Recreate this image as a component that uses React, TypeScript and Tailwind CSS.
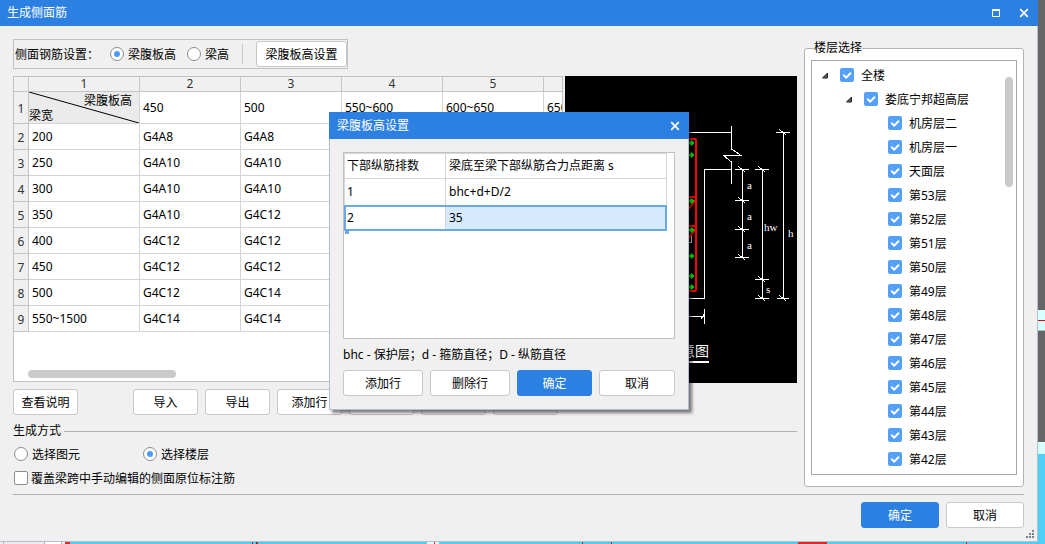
import React, { useState } from 'react';

const COLUMNS = ['450', '500', '550~600', '600~650', '650~700'];

const ROWS: string[][] = [
  ['200', 'G4A8', 'G4A8', 'G4A8', 'G4A10', 'G4A10'],
  ['250', 'G4A10', 'G4A10', 'G4A10', 'G4C12', 'G4C12'],
  ['300', 'G4A10', 'G4A10', 'G4C12', 'G4C12', 'G4C12'],
  ['350', 'G4A10', 'G4C12', 'G4C12', 'G4C12', 'G4C14'],
  ['400', 'G4C12', 'G4C12', 'G4C12', 'G4C14', 'G4C14'],
  ['450', 'G4C12', 'G4C12', 'G4C14', 'G4C14', 'G4C14'],
  ['500', 'G4C12', 'G4C14', 'G4C14', 'G4C14', 'G4C16'],
  ['550~1500', 'G4C14', 'G4C14', 'G4C14', 'G4C16', 'G4C16'],
];

const FLOORS: { label: string; level: number }[] = [
  { label: '全楼', level: 0 },
  { label: '娄底宁邦超高层', level: 1 },
  { label: '机房层二', level: 2 },
  { label: '机房层一', level: 2 },
  { label: '天面层', level: 2 },
  ...Array.from({ length: 12 }, (_, i) => ({ label: `第${53 - i}层`, level: 2 })),
];

const INDENT = ['pl-[10px]', 'pl-[34px]', 'pl-[58px]'];

const CloseIcon = () => (
  <svg width="10" height="10" viewBox="0 0 10 10" fill="none" stroke="white" strokeWidth="1.7">
    <path d="M1.2 1.2 8.8 8.8M8.8 1.2 1.2 8.8" />
  </svg>
);

type ButtonProps = { children: React.ReactNode; className?: string; primary?: boolean; disabled?: boolean };

const Button: React.FC<ButtonProps> = ({ children, className = '', primary, disabled }) => (
  <button
    type="button"
    disabled={disabled}
    className={`h-[26px] shrink-0 rounded-[3px] border pt-[2px] text-center whitespace-nowrap ${
      primary ? 'bg-[#2c80e2] border-[#2c80e2] text-white' : 'border-[#c8c8c8] text-black'
    } ${primary ? '' : disabled ? 'bg-[#e9e9e9]' : 'bg-white'} ${className}`}
  >
    {children}
  </button>
);

type RadioProps = { name: string; label: string; checked: boolean; onChange: () => void; className?: string };

const Radio: React.FC<RadioProps> = ({ name, label, checked, onChange, className = '' }) => (
  <label className={`flex h-4 items-center gap-1 whitespace-nowrap ${className}`}>
    <input
      type="radio"
      name={name}
      checked={checked}
      onChange={onChange}
      className="grid size-[14px] shrink-0 appearance-none place-content-center rounded-full border border-[#8c8c8c] bg-white before:size-[6px] before:rounded-full checked:before:bg-[#4c9dfb]"
    />
    <span className="pt-[2px]">{label}</span>
  </label>
);

const Checkbox: React.FC<{ label: string; initial?: boolean; className?: string }> = ({ label, initial = false, className = '' }) => {
  const [on, setOn] = useState(initial);
  return (
    <label className={`flex h-4 items-center whitespace-nowrap ${className}`}>
      <span className="relative flex size-[14px] shrink-0">
        <input
          type="checkbox"
          checked={on}
          onChange={() => setOn(!on)}
          className="size-[14px] appearance-none rounded-[2px] border border-[#8c8c8c] bg-white checked:border-[#54a0fa] checked:bg-[#54a0fa]"
        />
        {on && (
          <svg className="pointer-events-none absolute inset-0" width="14" height="14" viewBox="0 0 14 14" fill="none" stroke="white" strokeWidth="2">
            <path d="M3.3 6.7 6.2 9.6 11 4.6" />
          </svg>
        )}
      </span>
      <span className="pt-[2px]">{label}</span>
    </label>
  );
};

const RebarTable = () => (
  <div className="relative mb-px min-w-0 flex-1 overflow-hidden border border-[#bfc1c3] bg-white">
    <table className="w-[631px] table-fixed border-separate border-spacing-0">
      <colgroup>
        <col className="w-[15px]" />
        <col className="w-[111px]" />
        {COLUMNS.map((c) => <col key={c} className="w-[101px]" />)}
      </colgroup>
      <thead>
        <tr className="h-[15px] bg-[#f0f0f0] text-[#333]">
          <td className="border-r border-b border-[#c4c4c4] p-0" />
          {[1, 2, 3, 4, 5, 6].map((n) => (
            <th key={n} scope="col" className="border-r border-b border-[#c4c4c4] p-0 leading-[14px] font-normal">{n}</th>
          ))}
        </tr>
      </thead>
      <tbody>
        <tr className="h-8">
          <th scope="row" className="border-r border-b border-[#c4c4c4] bg-[#f0f0f0] px-0 pt-[2px] pb-0 font-normal text-[#333]">1</th>
          <td className="relative border-r border-b border-[#d4d4d4] bg-[#ebebeb] p-0">
            <svg className="absolute inset-0 h-full w-full" viewBox="0 0 110 31" preserveAspectRatio="none" stroke="black" strokeWidth="1">
              <path d="M0 0 110 31" />
            </svg>
            <div className="relative pr-[7px] text-right leading-[17px]">梁腹板高</div>
            <div className="relative leading-[14px]">梁宽</div>
          </td>
          {COLUMNS.map((c) => (
            <td key={c} className="border-r border-b border-[#d4d4d4] py-0 pr-0 pl-[3px]">{c}</td>
          ))}
        </tr>
        {ROWS.map((row, r) => (
          <tr key={row[0]} className="h-[26px]">
            <th scope="row" className="border-r border-b border-[#c4c4c4] bg-[#f0f0f0] px-0 pt-[2px] pb-0 font-normal text-[#333]">{r + 2}</th>
            {row.map((v, i) => (
              <td key={i} className="border-r border-b border-[#d4d4d4] py-0 pr-0 pl-[3px]">{v}</td>
            ))}
          </tr>
        ))}
      </tbody>
    </table>
    <div className="absolute bottom-[3px] left-[14px] h-2 w-[148px] rounded-full bg-[#cacaca]" />
  </div>
);

// dimension tick: short bar with a slash across the line end
const Tick: React.FC<{ x: number; y: number; w?: number }> = ({ x, y, w = 7 }) => (
  <path d={`M${x - w} ${y}H${x + w}M${x - 4} ${y - 3}L${x + 3} ${y + 2}`} />
);

const SectionDrawing = () => (
  <svg className="h-[307px] w-[232px] shrink-0 bg-black" viewBox="0 0 232 307" fill="none">
    <g stroke="white" strokeWidth="1" shapeRendering="crispEdges">
      <path d="M20 56.5H166.5M166.5 50V73L176 79.5H158.5L166.5 86V108" />
      <path d="M166 93.5H139.5V222.5H40" />
      <path d="M40 240.5H139.5M139.5 233V248M136 243 140 237" />
      <path d="M177.5 93V181M197.5 93V222M218.5 56V222" />
      <path d="M126.5 157V166H120" stroke="#c8c8c8" />
      <Tick x={177} y={93.5} />
      <Tick x={177} y={124.5} />
      <Tick x={177} y={153.5} />
      <Tick x={177} y={181.5} />
      <Tick x={197} y={93.5} />
      <Tick x={197} y={203.5} />
      <Tick x={197} y={222.5} />
      <Tick x={218} y={56.5} />
      <Tick x={218} y={222.5} w={6} />
    </g>
    <g stroke="red" strokeWidth="2">
      <rect x="50" y="63" width="81" height="152" rx="1" />
      <path d="M50 121H131M131 123 123 134M50 150H131M131 152 123 163" />
    </g>
    <g fill="#00f000">
      {[66, 78, 124, 153, 179, 199, 210].map((y) => (
        <path key={y} d={`M126.500 ${y - 2}l3 3-3 3-3-3z`} />
      ))}
    </g>
    <g fill="white" className="font-['Liberation_Serif','Noto_Sans_CJK_SC',serif] text-[11px]">
      <text x="182" y="113">a</text>
      <text x="182" y="144">a</text>
      <text x="182" y="173">a</text>
      <text x="199" y="155">hw</text>
      <text x="201" y="217">s</text>
      <text x="223" y="161">h</text>
      <text x="144" y="280" textAnchor="end" className="text-[14px]">示意图</text>
    </g>
    <path d="M60 286H144" stroke="white" strokeWidth="2" />
  </svg>
);

const FloorTree = () => (
  <fieldset className="mt-px w-[220px] shrink-0 self-start rounded-[3px] border border-[#b4b4b4] bg-white px-[6px] pb-[11px]">
    <legend className="ml-[3px] h-4 leading-4">楼层选择</legend>
    <div className="relative mt-1 border border-[#a8a8a8] bg-white pt-[2px] pb-[3px]">
      <ul>
        {FLOORS.map((f) => (
          <li key={f.label} className={`flex h-6 items-center ${INDENT[f.level]}`}>
            <span className="flex w-[18px] shrink-0">
              {f.level < 2 && (
                <svg width="6" height="7" viewBox="0 0 6 7" fill="#555" stroke="#262626" strokeWidth="1">
                  <path d="M5.500 1V6H.5z" />
                </svg>
              )}
            </span>
            <Checkbox label={f.label} initial className="gap-[7px]" />
          </li>
        ))}
      </ul>
      <div className="absolute top-4 right-[3px] h-[110px] w-2 rounded-full bg-[#cacaca]" />
    </div>
  </fieldset>
);

const SettingsDialog: React.FC<{ onClose: () => void }> = ({ onClose }) => (
  <div
    role="dialog"
    aria-label="梁腹板高设置"
    className="absolute top-[112px] left-[329px] w-[360px] bg-[#f0f0f0] shadow-[3px_3px_3px_rgba(0,0,0,0.5)]"
  >
    <header className="flex h-[27px] items-center justify-between bg-[#2c80e2] pr-[9px] pl-2 text-white">
      <h2>梁腹板高设置</h2>
      <button type="button" aria-label="关闭" onClick={onClose}><CloseIcon /></button>
    </header>
    <div className="border-x border-b border-[#b4bfcc] px-[13px] pt-[13px] pb-[13px]">
      <div className="h-[187px] border border-[#bfc1c3] bg-white">
        <table className="w-[323px] table-fixed border-separate border-spacing-0 border-t border-l border-[#d8d8d8]">
          <colgroup>
            <col className="w-[101px]" />
            <col />
          </colgroup>
          <tbody>
            <tr className="h-[25px]">
              <th scope="col" className="border-r border-b border-[#d4d4d4] py-0 pr-0 pl-[2px] text-left font-normal">下部纵筋排数</th>
              <th scope="col" className="border-r border-b border-[#d4d4d4] py-0 pr-0 pl-[3px] text-left font-normal">梁底至梁下部纵筋合力点距离 s</th>
            </tr>
            <tr className="h-[26px]">
              <td className="border-r border-[#d4d4d4] py-0 pr-0 pl-[2px]">1</td>
              <td className="border-r border-[#d4d4d4] py-0 pr-0 pl-[3px]">bhc+d+D/2</td>
            </tr>
            <tr className="relative h-[26px]">
              <td className="border-r border-[#d4d4d4] py-0 pr-0 pl-[2px]">
                2
                <span className="pointer-events-none absolute inset-y-0 -left-px right-0 border-2 border-[#6aa9e8]" />
                <span className="absolute -bottom-[3px] left-0 h-1 w-1 bg-[#6aa9e8]" />
              </td>
              <td className="bg-[#d6e9ff] py-0 pr-0 pl-[3px]">35</td>
            </tr>
          </tbody>
        </table>
      </div>
      <p className="mt-2 leading-4">bhc - 保护层；d - 箍筋直径；D - 纵筋直径</p>
      <div className="mt-[7px] flex gap-[7px]">
        <Button className="w-20">添加行</Button>
        <Button className="w-20">删除行</Button>
        <Button className="w-[75px]" primary>确定</Button>
        <Button className="flex-1">取消</Button>
      </div>
    </div>
  </div>
);

export default function App() {
  const [basis, setBasis] = useState('web');
  const [mode, setMode] = useState('floor');
  const [dialogOpen, setDialogOpen] = useState(true);

  return (
    <div className="relative bg-[#4dcff8] font-['Noto_Sans','Noto_Sans_CJK_SC',sans-serif] text-[12px] leading-4 text-black">
      <div className="flex">
        <div className="min-w-0 flex-1">
          <header className="flex h-[26px] items-center justify-between bg-[#2c80e2] pr-[9px] pl-[7px] text-white">
            <h1>生成侧面筋</h1>
            <div className="flex items-center gap-[18px]">
              <button type="button" aria-label="最大化">
                <svg width="10" height="10" viewBox="0 0 10 10" fill="none" stroke="white">
                  <path d="M1.500 2V8.500H8.500V2M1 2.500H9" />
                  <path d="M1 2H9" strokeWidth="2" />
                </svg>
              </button>
              <button type="button" aria-label="关闭"><CloseIcon /></button>
            </div>
          </header>

          <main className="relative border-r border-b border-[#b4bfcc] bg-[#f0f0f0] px-[13px] py-[13px]">
            <div className="flex gap-[7px]">
              <div className="min-w-0 flex-1">
                <div className="flex h-[30px] w-max items-center border border-[#bfc3c8] pl-px">
                  <span className="pt-[2px]">侧面钢筋设置：</span>
                  <Radio className="ml-[11px]" name="basis" label="梁腹板高" checked={basis === 'web'} onChange={() => setBasis('web')} />
                  <Radio className="ml-[11px]" name="basis" label="梁高" checked={basis === 'beam'} onChange={() => setBasis('beam')} />
                  <span className="mx-[13px] h-5 w-px bg-[#c8c8c8]" />
                  <button
                    type="button"
                    onClick={() => setDialogOpen(true)}
                    className="h-[26px] w-[91px] rounded-[3px] border border-[#c8c8c8] bg-white pt-[2px]"
                  >
                    梁腹板高设置
                  </button>
                </div>

                <div className="mt-[7px] flex gap-[2px]">
                  <RebarTable />
                  <SectionDrawing />
                </div>

                <div className="mt-[6px] flex gap-[7px]">
                  <Button className="mr-12 w-[65px]">查看说明</Button>
                  <Button className="w-[65px]">导入</Button>
                  <Button className="w-[65px]">导出</Button>
                  <Button className="w-[65px]">添加行</Button>
                  <Button className="w-[65px]">删除行</Button>
                  <Button className="w-[65px]" disabled>添加列</Button>
                  <Button className="w-[65px]" disabled>删除列</Button>
                </div>

                <fieldset className="mt-2 border-t border-[#b0b0b0]">
                  <legend className="pr-[3px]">生成方式</legend>
                  <div className="mt-[7px] flex items-center">
                    <Radio className="w-[129px] pl-px" name="mode" label="选择图元" checked={mode === 'element'} onChange={() => setMode('element')} />
                    <Radio className="pl-px" name="mode" label="选择楼层" checked={mode === 'floor'} onChange={() => setMode('floor')} />
                  </div>
                  <Checkbox className="mt-2 gap-[3px] pl-px" label="覆盖梁跨中手动编辑的侧面原位标注筋" />
                </fieldset>
              </div>
              <FloorTree />
            </div>

            <hr className="mt-[7px] border-[#b0b0b0]" />
            <div className="mt-[7px] flex justify-end gap-[7px]">
              <Button className="w-[78px]" primary>确定</Button>
              <Button className="w-[78px]">取消</Button>
            </div>

            <svg className="absolute right-[3px] bottom-[3px]" width="8" height="8" viewBox="0 0 8 8" fill="#7b818b">
              <path d="M6 0h2v2H6zM3 3h2v2H3zM6 3h2v2H6zM0 6h2v2H0zM3 6h2v2H3zM6 6h2v2H6z" />
            </svg>
          </main>
        </div>

        <div className="flex w-[7px] shrink-0 flex-col" aria-hidden="true">
          <div className="h-[310px] bg-[#666]" />
          <div className="h-[10px] bg-[#d6ffff]" />
          <div className="h-px bg-red-600" />
          <div className="h-[9px] bg-[#d6ffff]" />
          <div className="h-px bg-[#a9c4c8]" />
          <div className="h-[111px] bg-[#666]" />
          <div className="h-3 bg-[#d6ffff]" />
        </div>
      </div>

      {/* sliver of the model view below the window */}
      <svg className="block h-[2px] w-full" viewBox="0 0 1045 2" preserveAspectRatio="none" aria-hidden="true">
        <path d="M0 0H65V2H0z" fill="#ececec" />
        <path d="M45 0H61V2H45z" fill="#fff" />
        <path d="M3 0H4V2H3zM44 0H45V2H44zM61 0H62V2H61z" fill="#b4b4b4" />
        <path d="M427 0H439V2H427z" fill="#e4ffff" />
        <path d="M65 0H70V2H65zM434 0H435V2H434zM798 0H827V2H798zM966 0H967V2H966z" fill="#f02020" />
        <path d="M252 0H253V2H252zM256 0H258V2H256zM582 0H583V2H582zM611 0H612V2H611z" fill="#8a3340" />
      </svg>

      {dialogOpen && <SettingsDialog onClose={() => setDialogOpen(false)} />}
    </div>
  );
}
